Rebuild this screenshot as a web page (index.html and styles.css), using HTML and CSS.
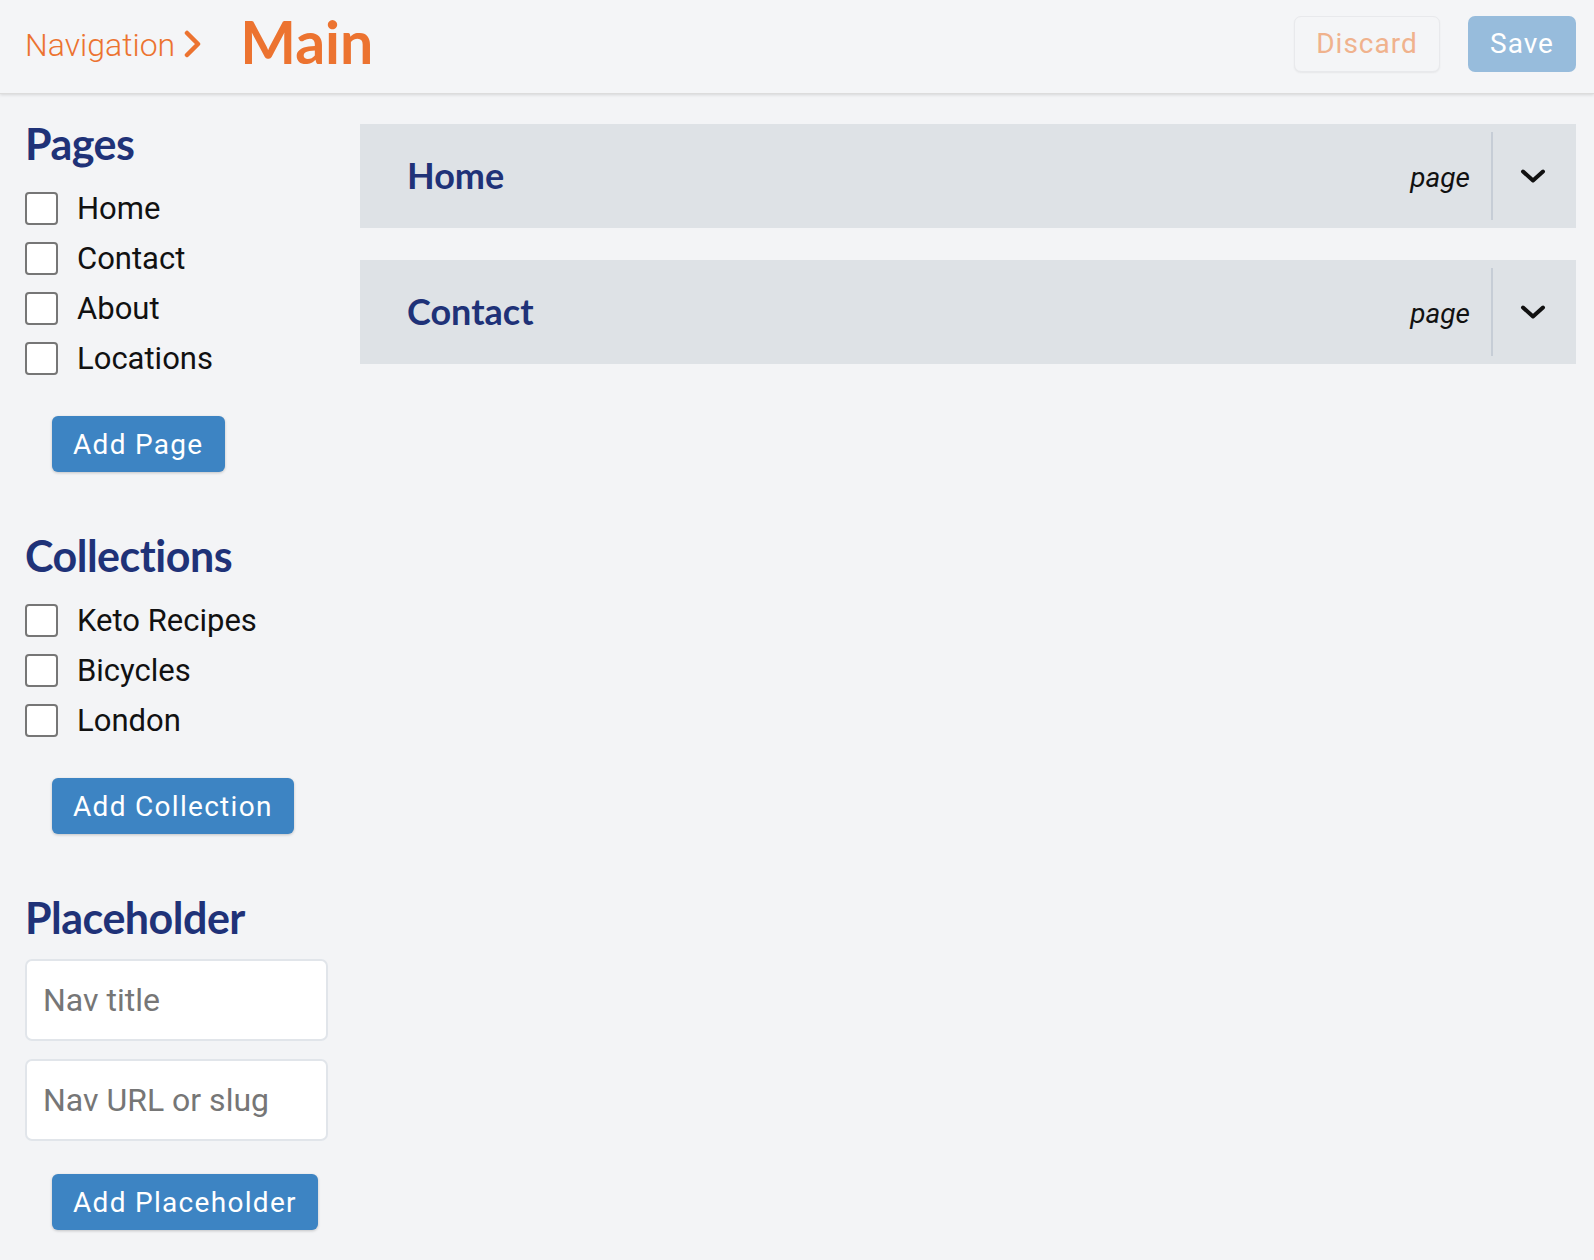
FILE: index.html
```html
<!DOCTYPE html>
<html lang="en">
<head>
<meta charset="utf-8">
<title>Navigation – Main</title>
<link rel="stylesheet" href="styles.css">
</head>
<body>
<header class="topbar">
  <div class="crumbs">
    <span class="crumb">Navigation</span>
    <svg class="crumb-sep" width="18" height="28" viewBox="0 0 18 28"><polyline points="3,3 14,14 3,25" fill="none" stroke="#ec7330" stroke-width="4.5" stroke-linecap="round" stroke-linejoin="round"/></svg>
    <h1 class="title">Main</h1>
  </div>
  <div class="actions">
    <button class="btn-discard">Discard</button>
    <button class="btn-save">Save</button>
  </div>
</header>
<div class="layout">
  <aside class="sidebar">
    <section class="group">
      <h2 class="group-title">Pages</h2>
      <ul class="checklist">
        <li><span class="box"></span><span class="label">Home</span></li>
        <li><span class="box"></span><span class="label">Contact</span></li>
        <li><span class="box"></span><span class="label">About</span></li>
        <li><span class="box"></span><span class="label">Locations</span></li>
      </ul>
      <button class="btn-add">Add Page</button>
    </section>
    <section class="group">
      <h2 class="group-title">Collections</h2>
      <ul class="checklist">
        <li><span class="box"></span><span class="label">Keto Recipes</span></li>
        <li><span class="box"></span><span class="label">Bicycles</span></li>
        <li><span class="box"></span><span class="label">London</span></li>
      </ul>
      <button class="btn-add">Add Collection</button>
    </section>
    <section class="group">
      <h2 class="group-title">Placeholder</h2>
      <div class="fields">
        <input class="field" type="text" placeholder="Nav title">
        <input class="field" type="text" placeholder="Nav URL or slug">
      </div>
      <button class="btn-add btn-add-ph">Add Placeholder</button>
    </section>
  </aside>
  <main class="items">
    <div class="item">
      <span class="item-name">Home</span>
      <span class="item-type">page</span>
      <span class="item-toggle"><svg width="26" height="16" viewBox="0 0 26 16"><polyline points="3,3.5 13,12.5 23,3.5" fill="none" stroke="#111" stroke-width="4" stroke-linecap="round" stroke-linejoin="round"/></svg></span>
    </div>
    <div class="item">
      <span class="item-name">Contact</span>
      <span class="item-type">page</span>
      <span class="item-toggle"><svg width="26" height="16" viewBox="0 0 26 16"><polyline points="3,3.5 13,12.5 23,3.5" fill="none" stroke="#111" stroke-width="4" stroke-linecap="round" stroke-linejoin="round"/></svg></span>
    </div>
  </main>
</div>
</body>
</html>
```
FILE: styles.css
```css
* { box-sizing: border-box; }
html, body { margin: 0; padding: 0; }
body {
  background: #f3f4f6;
  font-family: Roboto, "Liberation Sans", sans-serif;
  color: #111;
  min-height: 1260px;
}
.topbar {
  height: 94px;
  background: #f4f5f7;
  border-bottom: 1px solid #dcdcdc;
  box-shadow: 0 1px 3px rgba(0,0,0,0.12);
  display: flex;
  align-items: center;
  justify-content: space-between;
  padding: 0 18px 6px 25px;
}
.crumbs { display: flex; align-items: center; }
.crumb {
  font-size: 32px;
  font-weight: 300;
  color: #ec7330;
  margin-top: 2px;
}
.crumb-sep { margin-left: 9px; margin-right: 38px; margin-top: 0; }
.title {
  margin: 0;
  font-family: Lato, "Noto Sans", sans-serif;
  font-weight: 700;
  font-size: 59px;
  line-height: 1;
  color: #ec7330;
  margin-top: -4px;
}
.actions { display: flex; gap: 28px; }
.actions button {
  height: 56px;
  border-radius: 7px;
  font-family: Roboto, sans-serif;
  font-size: 28px;
  letter-spacing: 1px;
  padding: 0;
  cursor: pointer;
}
.btn-discard {
  width: 146px;
  background: #f4f5f7;
  border: 1px solid #e8e9ec;
  box-shadow: 0 1px 2px rgba(0,0,0,0.06);
  color: #f0b28d;
}
.btn-save {
  width: 108px;
  background: #97bcdc;
  border: none;
  color: #fff;
}
.layout {
  display: flex;
  gap: 32px;
  padding: 0 18px 0 25px;
}
.sidebar { width: 303px; flex: none; padding-top: 23px; }
.group { margin-bottom: 57px; }
.group:last-child { margin-bottom: 0; }
.group-title {
  margin: 0;
  font-family: Lato, "Noto Sans", sans-serif;
  font-weight: 700;
  font-size: 43px;
  line-height: 54px;
  letter-spacing: -0.5px;
  color: #1f3278;
}
.checklist {
  list-style: none;
  margin: 21px 0 0;
  padding: 0;
  display: flex;
  flex-direction: column;
  gap: 17px;
}
.checklist li {
  display: flex;
  align-items: center;
  height: 33px;
}
.box {
  width: 33px;
  height: 33px;
  border: 2px solid #767676;
  border-radius: 4px;
  background: #fff;
  flex: none;
}
.label {
  margin-left: 19px;
  font-size: 31px;
  font-weight: 400;
  line-height: 33px;
  color: #111;
}
.btn-add {
  display: block;
  margin: 41px 0 0 27px;
  height: 56px;
  padding: 0 21px;
  background: #3d84c3;
  border: none;
  border-radius: 6px;
  box-shadow: 0 1px 3px rgba(0,0,0,0.2);
  color: #fff;
  font-family: Roboto, sans-serif;
  font-weight: 400;
  font-size: 28px;
  letter-spacing: 1.3px;
}
.btn-add-ph { margin-top: 33px; }
.fields {
  margin-top: 14px;
  display: flex;
  flex-direction: column;
  gap: 18px;
}
.field {
  width: 303px;
  height: 82px;
  border: 2px solid #e1e5ea;
  border-radius: 7px;
  background: #fff;
  padding: 0 16px;
  font-family: Roboto, sans-serif;
  font-size: 32px;
  color: #222;
}
.field::placeholder { color: #767676; }
.items {
  flex: 1;
  padding-top: 30px;
  display: flex;
  flex-direction: column;
  gap: 32px;
}
.item {
  height: 104px;
  background: #dee2e6;
  display: flex;
  align-items: center;
  padding: 8px 0 8px 47px;
}
.item-name {
  flex: 1;
  font-family: Lato, "Noto Sans", sans-serif;
  font-weight: 700;
  font-size: 36px;
  color: #1f3278;
  margin-top: -3px;
}
.item-type {
  font-style: italic;
  font-size: 28px;
  color: #111;
  margin-right: 21px;
  margin-top: 2px;
}
.item-toggle {
  align-self: stretch;
  width: 85px;
  border-left: 2px solid #c6cdd6;
  padding-right: 4px;
  display: flex;
  align-items: center;
  justify-content: center;
}
```
